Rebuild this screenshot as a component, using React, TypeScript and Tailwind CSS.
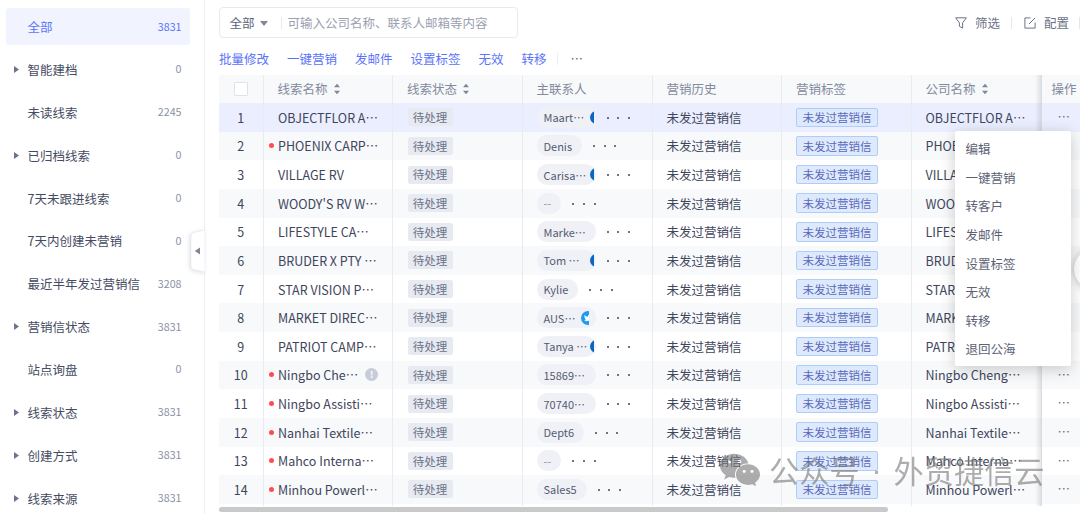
import React from "react";
import { FaWeixin, FaTwitter } from "react-icons/fa";

type NavItem = { label: string; count: string; arrow?: boolean; active?: boolean };

const NAV: NavItem[] = [
  { label: "全部", count: "3831", active: true },
  { label: "智能建档", count: "0", arrow: true },
  { label: "未读线索", count: "2245" },
  { label: "已归档线索", count: "0", arrow: true },
  { label: "7天未跟进线索", count: "0" },
  { label: "7天内创建未营销", count: "0" },
  { label: "最近半年发过营销信", count: "3208" },
  { label: "营销信状态", count: "3831", arrow: true },
  { label: "站点询盘", count: "0" },
  { label: "线索状态", count: "3831", arrow: true },
  { label: "创建方式", count: "3831", arrow: true },
  { label: "线索来源", count: "3831", arrow: true },
];

type Badge = "blue" | "twitter";
type Row = { name: string; company?: string; contact: string; full?: boolean; badge?: Badge; unread?: boolean; warn?: boolean };

const ROWS: Row[] = [
  { name: "OBJECTFLOR A…", contact: "Maart…", full: true, badge: "blue" },
  { name: "PHOENIX CARP…", contact: "Denis", unread: true },
  { name: "VILLAGE RV", contact: "Carisa…", full: true, badge: "blue" },
  { name: "WOODY'S RV W…", contact: "--" },
  { name: "LIFESTYLE CA…", contact: "Marke…", full: true },
  { name: "BRUDER X PTY …", contact: "Tom …", full: true, badge: "blue" },
  { name: "STAR VISION P…", contact: "Kylie" },
  { name: "MARKET DIREC…", contact: "AUS…", full: true, badge: "twitter" },
  { name: "PATRIOT CAMP…", contact: "Tanya …", full: true, badge: "blue" },
  { name: "Ningbo Che…", company: "Ningbo Cheng…", contact: "15869…", full: true, unread: true, warn: true },
  { name: "Ningbo Assisti…", contact: "70740…", full: true, unread: true },
  { name: "Nanhai Textile…", contact: "Dept6", unread: true },
  { name: "Mahco Interna…", contact: "--", unread: true },
  { name: "Minhou Powerl…", contact: "Sales5", unread: true },
];

const ACTIONS = ["批量修改", "一键营销", "发邮件", "设置标签", "无效", "转移"];
const MENU = ["编辑", "一键营销", "转客户", "发邮件", "设置标签", "无效", "转移", "退回公海"];

const COLS = "grid grid-cols-[44.5px_129.5px_129.5px_130px_129.5px_129.5px_130px_1fr]";
const CELL = "flex items-center border-r border-[#e9ebf0] pl-[14px]";

function Triangle({ className, d }: { className: string; d: string }) {
  return (
    <svg viewBox="0 0 10 10" preserveAspectRatio="none" className={className}>
      <path d={d} fill="currentColor" />
    </svg>
  );
}

function Sort() {
  return (
    <svg viewBox="0 0 8 12" className="ml-[5px] h-3 w-2 text-[#7f869a]" fill="currentColor">
      <path d="M4 .8 7 4.300H1zM4 11.200 1 7.700h6z" />
    </svg>
  );
}

// The ellipsis is its own flex item, so it takes the vertically centred CJK glyph.
function Clipped({ text, className = "" }: { text: string; className?: string }) {
  const cut = text.endsWith("…");
  return (
    <span className={"flex whitespace-pre " + className}>
      <span>{cut ? text.slice(0, -1) : text}</span>
      {cut && <span>…</span>}
    </span>
  );
}

function Sidebar() {
  return (
    <aside className="relative h-full w-[205px] shrink-0 border-r border-[#eeeff3] pt-[5.5px]">
      {NAV.map((n) => (
        <div key={n.label} className="flex h-[42.86px] items-center pl-1.5 pr-[14px]">
          <div className={"flex h-[37px] w-full items-center rounded-[3px] pl-2 pr-[8.500px] " + (n.active ? "bg-[#f1f4ff] text-[#5b73f5]" : "text-[#454c62]")}>
            <span className="w-[13.5px]">
              {n.arrow && <Triangle className="h-[7px] w-[5px] text-[#6d7489]" d="M0 0 10 5 0 10z" />}
            </span>
            <span className="flex-1 pt-px">{n.label}</span>
            <span className={"text-[10.700px] " + (n.active ? "" : "text-[#8a91a3]")}>{n.count}</span>
          </div>
        </div>
      ))}
      <div className="absolute right-[-1px] top-[229px] h-[44px] w-[15px] drop-shadow-[-1px_1px_2px_rgba(60,70,110,0.18)]">
        <svg viewBox="0 0 15 44" className="h-full w-full">
          <path d="M15 1 4 3.4Q1 4.200 1 7v30q0 2.800 3 3.600L15 43z" fill="#fff" stroke="#e8eaf0" strokeWidth="0.700" />
          <path d="M10 18.500v7L4.800 22z" fill="#7f869a" />
        </svg>
      </div>
    </aside>
  );
}

function Toolbar() {
  return (
    <>
      <div className="flex h-[31px] items-center">
        <div className="flex h-[31px] w-[299px] items-center rounded-[4px] border border-[#e8eaef] pl-[9.500px] pt-px">
          <span className="text-[#5b6276]">全部</span>
          <Triangle className="ml-[5px] h-[5px] w-2 text-[#7f869a]" d="M0 0H10L5 10z" />
          <span className="ml-[13px] h-3 w-px bg-[#e8eaef]" />
          <span className="ml-[6px] text-[#9ba1b0]">可输入公司名称、联系人邮箱等内容</span>
        </div>
        <div className="ml-auto flex items-center pt-px text-[#6b7387]">
          <svg viewBox="0 0 12 12" className="h-3 w-3" fill="none" stroke="currentColor" strokeWidth="1">
            <path d="M.7.800h10.600L7.600 5.900v5.200L4.400 9.300V5.900z" />
          </svg>
          <span className="ml-2">筛选</span>
          <span className="ml-[11px] h-3 w-px bg-[#e4e6ec]" />
          <svg viewBox="0 0 12 12" className="ml-3 h-3 w-3" fill="none" stroke="currentColor" strokeWidth="1">
            <path d="M6.500.900H.900v10.200h10.200V5.500M5 7 11.200.800" />
          </svg>
          <span className="ml-2">配置</span>
          <span className="ml-[10px] h-3 w-px bg-[#e4e6ec]" />
        </div>
      </div>
      <div className="mt-2.5 flex h-[21px] items-center gap-[18px] pt-px text-[#5b73f8]">
        {ACTIONS.map((a) => (
          <span key={a}>{a}</span>
        ))}
        <span className="-ml-2 h-3 w-px bg-[#eceef3]" />
        <span className="-ml-[5px] text-[#5b6276]">…</span>
      </div>
    </>
  );
}

function Contact({ row }: { row: Row }) {
  return (
    <>
      <span className={"relative flex h-[21px] items-center rounded-full bg-[#f0f1f7] pl-[7px] pr-2.5 text-[11px] " + (row.full ? "w-[59px] " : "") + (row.contact === "--" ? "text-[#8d93a5]" : "text-[#545b70]")}>
        <Clipped text={row.contact} className="pt-px" />
        {row.badge === "blue" && (
          <span className="absolute right-[2px] top-[4px] h-[13px] w-[3.500px] overflow-hidden">
            <span className="block h-[13px] w-[13px] rounded-full bg-[#0a66c2]" />
          </span>
        )}
        {row.badge === "twitter" && (
          <span className="absolute left-[44px] top-[3.500px] h-[14px] w-2 overflow-hidden">
            <span className="flex h-[14px] w-[14px] items-center justify-center rounded-full bg-[#1d9bf0] text-white">
              <FaTwitter size={8} className="shrink-0" />
            </span>
          </span>
        )}
      </span>
      <span className="ml-[11px] flex gap-[8.700px] pt-px">
        {[0, 1, 2].map((i) => (
          <span key={i} className="h-[2px] w-[2px] rounded-full bg-[#3f465c]" />
        ))}
      </span>
    </>
  );
}

function Table() {
  return (
    <div className="relative mt-[5.500px]">
      <div className={COLS + " h-[28.500px] bg-[#f7f9fb] text-[#838a9b]"}>
        <div className="flex items-center justify-center border-r border-[#e9ebf0]">
          <span className="mt-px h-3.5 w-3.5 rounded-[1px] border border-[#dfe2e9] bg-white" />
        </div>
        <div className={CELL + " pt-px"}>线索名称<Sort /></div>
        <div className={CELL + " pt-px"}>线索状态<Sort /></div>
        <div className={CELL + " pt-px"}>主联系人</div>
        <div className={CELL + " pt-px"}>营销历史</div>
        <div className={CELL + " pt-px"}>营销标签</div>
        <div className={CELL + " pt-px"}>公司名称<Sort /></div>
        <div className="flex items-center pl-2.5 pt-px">操作</div>
      </div>
      {ROWS.map((r, i) => (
        <div key={i} className={COLS + " h-[28.640px] text-[#3f465c] " + (i === 0 ? "bg-[#ebeefe]" : i % 2 ? "bg-[#f7f9fb]" : "bg-white")}>
          <div className="flex items-center justify-center border-r border-[#e9ebf0] pt-[1.500px]">{i + 1}</div>
          <div className="flex items-center border-r border-[#e9ebf0] pl-[5.500px]">
            <span className="flex w-[9px] items-center">
              {r.unread && <span className="h-[5px] w-[5px] rounded-full bg-[#ff4d4f]" />}
            </span>
            <Clipped text={r.name} className="pt-[1.500px]" />
            {r.warn && (
              <span className="ml-[7px] flex h-[13px] w-[13px] items-center justify-center rounded-full bg-[#c8cbd8] text-[9px] font-bold text-white">!</span>
            )}
          </div>
          <div className={CELL}>
            <span className="ml-[0.500px] flex h-[18px] w-[45px] items-center justify-center rounded-[2px] bg-[#e7eaf1] pt-px text-[11.500px] text-[#6b7388]">待处理</span>
          </div>
          <div className={CELL}><Contact row={r} /></div>
          <div className={CELL + " pt-[1.500px]"}>未发过营销信</div>
          <div className={CELL}>
            <span className="flex h-[19.500px] w-[82px] items-center justify-center rounded-[2px] border border-[#adcdfc] bg-[#deeafc] pt-px text-[11.500px] text-[#5a69bb]">未发过营销信</span>
          </div>
          <div className={CELL}><Clipped text={r.company ?? r.name} className="pt-[1.500px]" /></div>
          <div className="flex items-center pl-4 text-[#6a7186]">…</div>
        </div>
      ))}
      <div className={COLS + " h-0.5"}>
        {[0, 1, 2, 3, 4, 5, 6].map((i) => (
          <div key={i} className="border-r border-[#e9ebf0]" />
        ))}
      </div>
      <div className="absolute bottom-0 left-[816px] top-0 w-[6.500px] border-r border-[#d9dbe0] bg-linear-to-r from-transparent to-black/10" />
    </div>
  );
}

export default function App() {
  return (
    <div lang="zh-CN" className="relative flex h-[514px] w-[1080px] overflow-hidden whitespace-nowrap bg-white font-['Noto_Sans_CJK_SC',sans-serif] text-[12.500px] leading-none">
      <Sidebar />
      <main className="min-w-0 flex-1 pl-3.5 pt-[7px]">
        <Toolbar />
        <Table />
        <div className="mt-px h-[5px] w-[669px] rounded-full bg-[#c9c9c9]" />
      </main>

      <div className="absolute right-[-34px] top-[249px] h-10 w-10 rounded-full bg-white shadow-[0_1px_8px_rgba(0,0,0,0.25)]" />

      <div className="absolute left-[955px] top-[130.500px] h-[235.500px] w-[116px] rounded-[2px] bg-white pt-[4px] text-[#5b6274] shadow-[0_3px_16px_rgba(0,0,0,0.2)]">
        {MENU.map((m) => (
          <div key={m} className="flex h-[28.640px] items-center pl-[10.500px] pt-px">{m}</div>
        ))}
      </div>

      <div className="absolute left-[719px] top-[450px] flex h-10 items-center text-[30.200px] text-[#777777] opacity-60">
        <FaWeixin size={42} />
        <span className="ml-2">公众号</span>
        <span className="w-[34px] text-center font-['Liberation_Sans',sans-serif]">·</span>
        <span>外贸捷信云</span>
      </div>
    </div>
  );
}
